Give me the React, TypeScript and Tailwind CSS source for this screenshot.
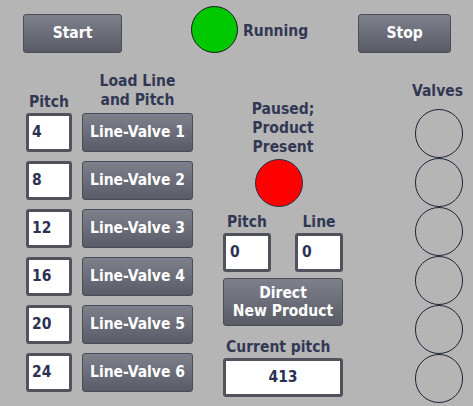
import React from "react";

const pitches = ["4", "8", "12", "16", "20", "24"];

function Btn({ children, className = "" }: { children: React.ReactNode; className?: string }) {
  return (
    <div
      className={`flex items-center justify-center text-center rounded-[3px] border-[1.5px] border-[#4a4c57] bg-gradient-to-b from-[#7e808c] to-[#595b67] text-white ${className}`}
    >
      {children}
    </div>
  );
}

function Field({ value, className = "" }: { value: string; className?: string }) {
  return (
    <div className={`h-[39px] rounded-[3px] border-[3px] border-[#50535e] bg-white flex items-center text-[#2b3152] ${className}`}>
      {value}
    </div>
  );
}

export default function App() {
  return (
    <div className="w-[473px] h-[406px] bg-[#b5b5b5] font-['DejaVu_Sans_Condensed','DejaVu_Sans',sans-serif] [font-stretch:condensed] font-bold text-[15.5px] text-[#323854] overflow-hidden">
      {/* top bar */}
      <div className="flex items-start pl-[23px] pt-[6px] h-[53px]">
        <Btn className="mt-[8px] w-[99px] h-[39px]">Start</Btn>
        <div className="ml-[69px] w-[47px] h-[47px] rounded-full bg-[#00c800] border border-[#1a1a1a]" />
        <span className="ml-[5px] mt-[16px] leading-[19px]">Running</span>
        <Btn className="ml-[50px] mt-[8px] w-[93px] h-[39px]">Stop</Btn>
      </div>

      <div className="flex items-start pl-[26px] mt-[19px]">
        {/* left */}
        <div className="w-[167px]">
          <div className="grid grid-cols-[46px_111px] gap-x-[10px] items-end">
            <span className="text-center leading-[16px]">Pitch</span>
            <span className="text-center leading-[19px]">
              Load Line
              <br />
              and Pitch
            </span>
          </div>
          <div className="mt-[3px] flex flex-col gap-[9px]">
            {pitches.map((p, i) => (
              <div key={p} className="flex gap-[10px]">
                <Field value={p} className="w-[46px] pl-[3px]" />
                <Btn className="w-[111px] h-[39px]">Line-Valve {i + 1}</Btn>
              </div>
            ))}
          </div>
        </div>

        {/* middle */}
        <div className="ml-[30px] w-[120px] mt-[28px] flex flex-col">
          <div className="text-center leading-[19px]">
            Paused;
            <br />
            Product
            <br />
            Present
          </div>
          <div className="ml-[32px] mt-[2px] w-[48px] h-[48px] rounded-full bg-[#ff0000] border border-[#2a2d45]" />
          <div className="mt-[6px] flex justify-between leading-[19px]">
            <span className="w-[48px] text-center">Pitch</span>
            <span className="w-[48px] text-center">Line</span>
          </div>
          <div className="mt-[1px] flex justify-between">
            <Field value="0" className="w-[48px] pl-[4px]" />
            <Field value="0" className="w-[48px] pl-[4px]" />
          </div>
          <Btn className="mt-[6px] h-[48px] leading-[18px]">
            Direct
            <br />
            New Product
          </Btn>
          <span className="mt-[12px] pl-[3px] leading-[19px]">Current pitch</span>
          <Field value="413" className="mt-[1px] justify-center" />
        </div>

        {/* right */}
        <div className="ml-auto mr-[10px] mt-[10px] flex flex-col items-end">
          <span className="leading-[19px]">Valves</span>
          <div className="mt-[8px] flex flex-col">
            {pitches.map((p) => (
              <div key={p} className="w-[48px] h-[49px] rounded-full border-[1.5px] border-[#1f2338]" />
            ))}
          </div>
        </div>
      </div>
    </div>
  );
}
